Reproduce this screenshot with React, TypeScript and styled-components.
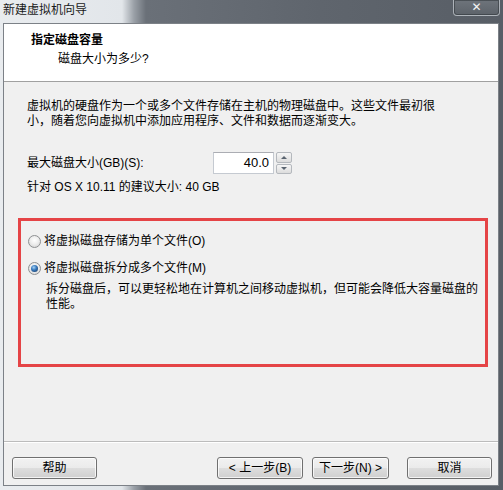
import React from "react";
import styled, { createGlobalStyle } from "styled-components";

const Global = createGlobalStyle`
  html, body { margin: 0; padding: 0; background: #fff; }
  body { font-family: "Liberation Sans", "Noto Sans CJK SC", sans-serif; font-size: 12px; color: #000; }
  * { box-sizing: border-box; }
`;

const glass = `linear-gradient(to right, #e9ecef 0px, #e2e6ea 122px, #9aa0a7 134px, #6a7078 146px, #5f656d 320px, #585e66 100%)`;

const Window = styled.div`
  width: 503px;
  height: 490px;
  display: flex;
  flex-direction: column;
  background: ${glass};
`;

const TitleBar = styled.div`
  height: 23px;
  display: flex;
  justify-content: space-between;
  align-items: flex-start;
  padding-left: 3px;
`;

const TitleText = styled.div`
  font-size: 12px;
  line-height: 20px;
  color: #1a1a1a;
`;

const CloseBtn = styled.div`
  width: 47px;
  height: 16px;
  margin-right: 3px;
  border: 1px solid rgba(230, 235, 240, 0.55);
  border-top: none;
  border-radius: 0 0 4px 4px;
  background: linear-gradient(#6e747b, #5d636a);
  box-shadow: inset 0 0 0 1px rgba(40, 45, 50, 0.5);
  color: #f4f4f4;
  font-family: "DejaVu Sans", sans-serif;
  font-weight: bold;
  font-size: 12px;
  line-height: 14px;
  text-align: center;
`;

const Frame = styled.div`
  flex: 1;
  display: flex;
  padding: 0 4px 4px 3px;
`;

const Inner = styled.div`
  flex: 1;
  display: flex;
  flex-direction: column;
  border: 1px solid #7c8187;
  background: #f0f0f0;
`;

const Header = styled.div`
  height: 58px;
  background: #fff;
  border-bottom: 1px solid #a0a0a0;
  padding-top: 8px;
  display: flex;
  flex-direction: column;
`;

const HeaderTitle = styled.div`
  padding-left: 27px;
  font-weight: bold;
  line-height: 17px;
`;

const HeaderSub = styled.div`
  padding-left: 54px;
  margin-top: 2px;
  line-height: 17px;
`;

const Body = styled.div`
  flex: 1;
  display: flex;
  flex-direction: column;
  padding: 0 10px 0 14px;
`;

const Para = styled.div<{ $top: number }>`
  margin-top: ${(p) => p.$top}px;
  padding-left: 9px;
  line-height: 15px;
`;

const SizeRow = styled.div`
  margin-top: 23px;
  padding-left: 9px;
  display: flex;
  align-items: center;
  height: 22px;
`;

const SizeLabel = styled.div`
  width: 186px;
  line-height: 15px;
`;

const Spinner = styled.div`
  display: flex;
  align-items: stretch;
  height: 22px;
`;

const SpinInput = styled.div`
  width: 61px;
  border: 1px solid #c5cad1;
  border-top-color: #abadb3;
  background: #fff;
  text-align: right;
  padding-right: 4px;
  line-height: 20px;
  font-size: 13px;
`;

const SpinButtons = styled.div`
  margin-left: 2px;
  width: 16px;
  display: flex;
  flex-direction: column;
  gap: 1px;
`;

const SpinBtn = styled.div`
  flex: 1;
  border: 1px solid #b4b8bd;
  border-radius: 2px;
  background: linear-gradient(#f6f6f6, #dcdcdc);
  display: flex;
  align-items: center;
  justify-content: center;
`;

const Arrow = styled.div<{ $up?: boolean }>`
  width: 0;
  height: 0;
  border-left: 3px solid transparent;
  border-right: 3px solid transparent;
  ${(p) => (p.$up ? "border-bottom: 3px solid #5a6470;" : "border-top: 3px solid #5a6470;")}
`;

const Group = styled.div`
  margin-top: 23px;
  height: 149px;
  border: 3px solid #e54446;
  padding: 12px 0 0 7px;
  display: flex;
  flex-direction: column;
`;

const RadioRow = styled.div<{ $top?: number }>`
  display: flex;
  align-items: center;
  height: 17px;
  margin-top: ${(p) => p.$top ?? 0}px;
`;

const RadioDot = styled.div<{ $checked?: boolean }>`
  width: 13px;
  height: 13px;
  border-radius: 50%;
  border: 1px solid #8e9092;
  background: radial-gradient(circle at 50% 40%, #ffffff 0, #eeeeee 45%, #cfcfcf 100%);
  display: flex;
  align-items: center;
  justify-content: center;
  margin-right: 3px;
  &::after {
    content: "";
    display: ${(p) => (p.$checked ? "block" : "none")};
    width: 7px;
    height: 7px;
    border-radius: 50%;
    background: radial-gradient(circle at 40% 35%, #a8d4f5 0, #3a7cc0 40%, #112d55 100%);
  }
`;

const RadioLabel = styled.div`
  line-height: 15px;
`;

const Desc = styled.div`
  margin-top: 5px;
  padding-left: 18px;
  line-height: 15px;
`;

const Footer = styled.div`
  height: 44px;
  border-top: 1px solid #bcbcbc;
  box-shadow: inset 0 1px 0 #ffffff;
  display: flex;
  align-items: flex-start;
  padding: 15px 6px 0 8px;
`;

const Button = styled.div<{ $w: number; $ml?: number }>`
  width: ${(p) => p.$w}px;
  height: 22px;
  margin-left: ${(p) => p.$ml ?? 0}px;
  border: 1px solid #707070;
  border-radius: 3px;
  background: linear-gradient(#f2f2f2 0%, #ebebeb 48%, #dddddd 52%, #cfcfcf 100%);
  box-shadow: inset 0 0 0 1px rgba(255, 255, 255, 0.75);
  display: flex;
  align-items: center;
  justify-content: center;
  line-height: 15px;
`;

const Spacer = styled.div`
  flex: 1;
`;

export default function App() {
  return (
    <>
      <Global />
      <Window>
        <TitleBar>
          <TitleText>新建虚拟机向导</TitleText>
          <CloseBtn>✕</CloseBtn>
        </TitleBar>
        <Frame>
          <Inner>
            <Header>
              <HeaderTitle>指定磁盘容量</HeaderTitle>
              <HeaderSub>磁盘大小为多少?</HeaderSub>
            </Header>
            <Body>
              <Para $top={17}>
                虚拟机的硬盘作为一个或多个文件存储在主机的物理磁盘中。这些文件最初很
                <br />
                小，随着您向虚拟机中添加应用程序、文件和数据而逐渐变大。
              </Para>
              <SizeRow>
                <SizeLabel>最大磁盘大小(GB)(S):</SizeLabel>
                <Spinner>
                  <SpinInput>40.0</SpinInput>
                  <SpinButtons>
                    <SpinBtn>
                      <Arrow $up />
                    </SpinBtn>
                    <SpinBtn>
                      <Arrow />
                    </SpinBtn>
                  </SpinButtons>
                </Spinner>
              </SizeRow>
              <Para $top={6}>针对 OS X 10.11 的建议大小: 40 GB</Para>
              <Group>
                <RadioRow>
                  <RadioDot />
                  <RadioLabel>将虚拟磁盘存储为单个文件(O)</RadioLabel>
                </RadioRow>
                <RadioRow $top={10}>
                  <RadioDot $checked />
                  <RadioLabel>将虚拟磁盘拆分成多个文件(M)</RadioLabel>
                </RadioRow>
                <Desc>
                  拆分磁盘后，可以更轻松地在计算机之间移动虚拟机，但可能会降低大容量磁盘的
                  <br />
                  性能。
                </Desc>
              </Group>
            </Body>
            <Footer>
              <Button $w={85}>帮助</Button>
              <Spacer />
              <Button $w={86}>&lt; 上一步(B)</Button>
              <Button $w={77} $ml={9}>下一步(N) &gt;</Button>
              <Button $w={85} $ml={18}>取消</Button>
            </Footer>
          </Inner>
        </Frame>
      </Window>
    </>
  );
}
